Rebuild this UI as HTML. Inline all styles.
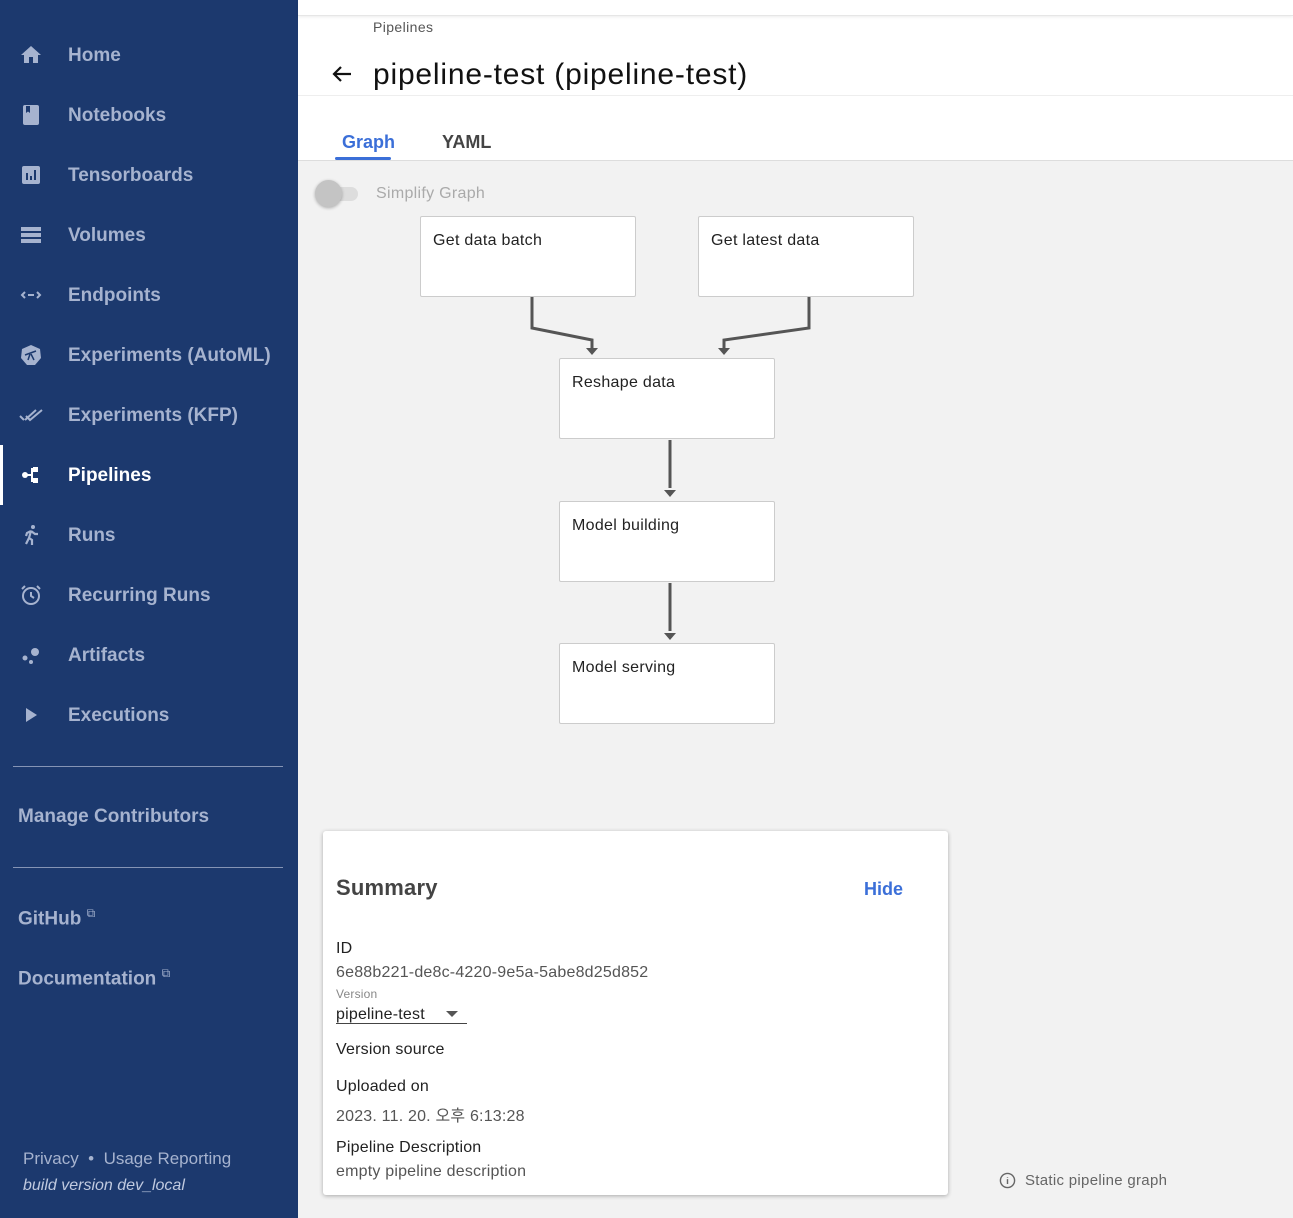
<!DOCTYPE html>
<html><head><meta charset="utf-8"><style>
*{box-sizing:border-box;margin:0;padding:0}
body{width:1293px;height:1218px;overflow:hidden;position:relative;font-family:"Liberation Sans","Noto Sans CJK KR",sans-serif;background:#f2f2f2}
#side{position:absolute;left:0;top:0;width:298px;height:1218px;background:#1c396e;color:#a6b3cf}
.it{position:absolute;left:0;width:298px;height:60px;font-size:19px;font-weight:bold;display:flex;align-items:center}
.it .ic{position:absolute;left:19px;width:24px;height:24px;top:18px}
.it span{position:absolute;left:68px;top:20px}
.act{color:#fff;border-left:3px solid #fff}
.hr{position:absolute;left:13px;width:270px;height:1px;background:#8594b5}
.lk{position:absolute;left:18px;font-size:19px;font-weight:bold}
.lk sup{font-size:12px;font-weight:normal}
#hdr{position:absolute;left:298px;top:0;width:995px;height:161px;background:#fff;border-bottom:1px solid #ddd}
.node{position:absolute;width:216px;height:81px;background:#fff;border:1px solid #ccc;border-radius:2px;font-size:16px;color:#222;padding:15px 12px;letter-spacing:.3px}
#card{position:absolute;left:323px;top:831px;width:625px;height:364px;background:#fff;border-radius:3px;box-shadow:0 1px 4px rgba(0,0,0,.3)}
.t{position:absolute;left:13px;font-size:16px;color:#222;letter-spacing:.2px}
.g{color:#555}
</style></head><body>
<div id="side">
<div class="it" style="top:25px"><svg class="ic" viewBox="0 0 24 24"><path fill="#a6b3cf" d="M10 20v-6h4v6h5v-8h3L12 3 2 12h3v8z"/></svg><span>Home</span></div>
<div class="it" style="top:85px"><svg class="ic" viewBox="0 0 24 24"><rect x="4" y="2" width="16" height="20" rx="2" fill="#a6b3cf"/><path d="M7 3h4v7l-2-1.5L7 10z" fill="#1c396e"/></svg><span>Notebooks</span></div>
<div class="it" style="top:145px"><svg class="ic" viewBox="0 0 24 24"><rect x="3" y="3" width="18" height="18" rx="2" fill="#a6b3cf"/><path d="M7 10h2v7H7zM11 13h2v4h-2zM15 7h2v10h-2z" fill="#1c396e"/></svg><span>Tensorboards</span></div>
<div class="it" style="top:205px"><svg class="ic" viewBox="0 0 24 24"><path fill="#a6b3cf" d="M2 4h20v4H2zM2 10h20v4H2zM2 16h20v4H2z"/></svg><span>Volumes</span></div>
<div class="it" style="top:265px"><svg class="ic" viewBox="0 0 24 24"><path fill="none" stroke="#a6b3cf" stroke-width="2" d="M6 9l-3 3 3 3M18 9l3 3-3 3M9 12h6"/></svg><span>Endpoints</span></div>
<div class="it" style="top:325px"><svg class="ic" viewBox="0 0 24 24"><path fill="#a6b3cf" d="M12 2l9 4 1 9-6 7H8l-6-7 1-9z"/><path d="M6 12l11-4M11 11l-2 6M12 11l3 6" stroke="#1c396e" stroke-width="1.5"/></svg><span>Experiments (AutoML)</span></div>
<div class="it" style="top:385px"><svg class="ic" viewBox="0 0 24 24"><path fill="none" stroke="#a6b3cf" stroke-width="2" d="M1 13l4 4M6 17L17 7M7 13l4 4L23 7"/></svg><span>Experiments (KFP)</span></div>
<div class="it act" style="top:445px"><svg class="ic" style="left:16px" viewBox="0 0 24 24"><circle cx="6" cy="12" r="3" fill="#fff"/><path fill="#fff" d="M8 11h5v2H8zM12 5h2v14h-2zM14 4h5v5h-5zM14 15h5v5h-5z"/></svg><span style="left:65px">Pipelines</span></div>
<div class="it" style="top:505px"><svg class="ic" viewBox="0 0 24 24"><circle cx="14" cy="4" r="2" fill="#a6b3cf"/><path fill="none" stroke="#a6b3cf" stroke-width="2.2" d="M7 21l3-6 3 2v5M12 8l-2 7M12 8l4 3h3M12 8l-4 2-1 3"/></svg><span>Runs</span></div>
<div class="it" style="top:565px"><svg class="ic" viewBox="0 0 24 24"><circle cx="12" cy="13" r="8" fill="none" stroke="#a6b3cf" stroke-width="2"/><path fill="none" stroke="#a6b3cf" stroke-width="2" d="M12 9v4l3 2M3 6l3-3M21 6l-3-3"/></svg><span>Recurring Runs</span></div>
<div class="it" style="top:625px"><svg class="ic" viewBox="0 0 24 24"><circle cx="16" cy="9" r="4" fill="#a6b3cf"/><circle cx="6" cy="15" r="2.5" fill="#a6b3cf"/><circle cx="12" cy="19" r="2" fill="#a6b3cf"/></svg><span>Artifacts</span></div>
<div class="it" style="top:685px"><svg class="ic" viewBox="0 0 24 24"><path fill="#a6b3cf" d="M7 5l11 7-11 7z"/></svg><span>Executions</span></div>
<div class="hr" style="top:766px"></div>
<div class="lk" style="top:806px">Manage Contributors</div>
<div class="hr" style="top:867px"></div>
<div class="lk" style="top:906px">GitHub <sup>⧉</sup></div>
<div class="lk" style="top:966px">Documentation <sup>⧉</sup></div>
<div style="position:absolute;left:23px;top:1149px;font-size:17px">Privacy &nbsp;•&nbsp; Usage Reporting</div>
<div style="position:absolute;left:23px;top:1177px;font-size:16px;font-style:italic;color:#c0cae0">build version dev_local</div>
</div>
<div id="hdr">
<div style="position:absolute;left:0;top:0;width:995px;height:16px;border-bottom:1px solid #e6e6e6;box-shadow:0 1px 3px rgba(0,0,0,.08)"></div>
<div style="position:absolute;left:75px;top:19px;font-size:14px;color:#555;letter-spacing:.4px">Pipelines</div>
<svg style="position:absolute;left:32px;top:62px" width="24" height="24" viewBox="0 0 24 24"><path fill="none" stroke="#111" stroke-width="2.2" d="M21 12H4M11 5l-7 7 7 7"/></svg>
<div style="position:absolute;left:75px;top:58px;font-size:30px;color:#111;letter-spacing:.8px">pipeline-test (pipeline-test)</div>
<div style="position:absolute;left:0;top:95px;width:995px;height:1px;background:#eee"></div>
<div style="position:absolute;left:44px;top:132px;font-size:18px;font-weight:bold;color:#3b6fd8">Graph</div>
<div style="position:absolute;left:37px;top:157px;width:56px;height:3px;background:#3b6fd8;border-radius:2px"></div>
<div style="position:absolute;left:144px;top:132px;font-size:18px;font-weight:bold;color:#444">YAML</div>
</div>
<div style="position:absolute;left:318px;top:187px;width:40px;height:14px;border-radius:7px;background:#ddd"></div>
<div style="position:absolute;left:315px;top:180px;width:27px;height:27px;border-radius:50%;background:#c4c4c4;box-shadow:0 1px 3px rgba(0,0,0,.3)"></div>
<div style="position:absolute;left:376px;top:185px;font-size:16px;color:#aaa;letter-spacing:.3px">Simplify Graph</div>
<svg style="position:absolute;left:0;top:0" width="1293" height="1218"><g fill="none" stroke="#555" stroke-width="3"><path d="M532 297v31l60 12v10M809 297v31l-85 12v10M670 440v48M670 583v48"/></g><g fill="#555"><path d="M586 348h12l-6 7zM718 348h12l-6 7zM664 490h12l-6 7zM664 633h12l-6 7z"/></g></svg>
<div class="node" style="left:420px;top:216px">Get data batch</div>
<div class="node" style="left:698px;top:216px">Get latest data</div>
<div class="node" style="left:559px;top:358px">Reshape data</div>
<div class="node" style="left:559px;top:501px">Model building</div>
<div class="node" style="left:559px;top:643px">Model serving</div>
<div id="card">
<div class="t" style="top:44px;font-size:22px;font-weight:bold;color:#444">Summary</div>
<div style="position:absolute;left:541px;top:48px;font-size:18px;font-weight:bold;color:#3b6fd8">Hide</div>
<div class="t" style="top:109px">ID</div>
<div class="t g" style="top:133px">6e88b221-de8c-4220-9e5a-5abe8d25d852</div>
<div class="t" style="top:156px;font-size:12px;color:#888">Version</div>
<div class="t" style="top:175px;width:131px;border-bottom:1px solid #444;height:18px">pipeline-test<span style="position:absolute;left:110px;top:5px;border:6px solid transparent;border-top-color:#555"></span></div>
<div class="t" style="top:210px">Version source</div>
<div class="t" style="top:247px">Uploaded on</div>
<div class="t g" style="top:271px">2023. 11. 20. 오후 6:13:28</div>
<div class="t" style="top:308px">Pipeline Description</div>
<div class="t g" style="top:332px">empty pipeline description</div>
</div>
<svg style="position:absolute;left:999px;top:1172px" width="17" height="17" viewBox="0 0 24 24"><circle cx="12" cy="12" r="10" fill="none" stroke="#666" stroke-width="2"/><path d="M12 10v7M12 7v1" stroke="#666" stroke-width="2"/></svg>
<div style="position:absolute;left:1025px;top:1172px;font-size:15px;color:#666;letter-spacing:.3px">Static pipeline graph</div>
</body></html>
